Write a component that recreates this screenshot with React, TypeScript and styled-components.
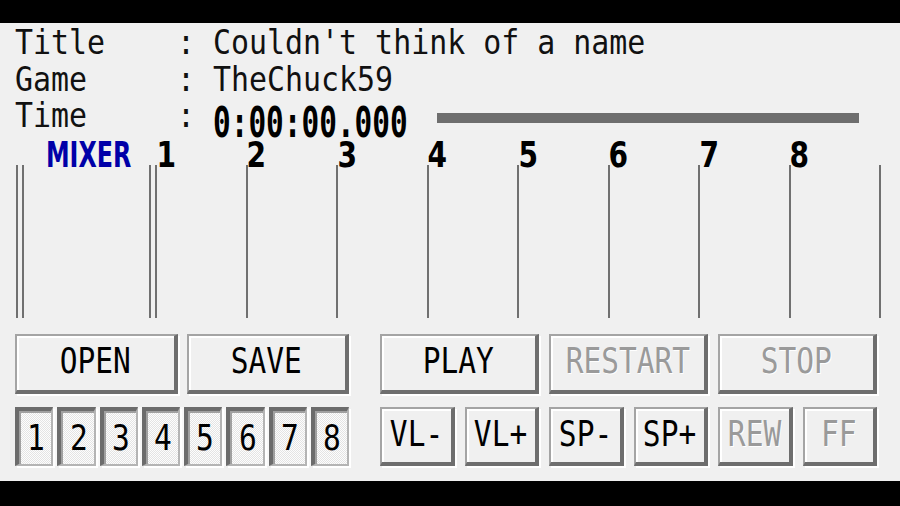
import React from 'react';
import styled, { createGlobalStyle } from 'styled-components';

const GlobalStyle = createGlobalStyle`
  html, body {
    margin: 0;
    padding: 0;
    background: #000;
  }
`;

const Screen = styled.div`
  width: 900px;
  height: 506px;
  padding: 23px 0 25px;
  box-sizing: border-box;
  background: #000;
`;

const Main = styled.div`
  height: 458px;
  background: #f0f0f0;
  display: flex;
  flex-direction: column;
`;

const Info = styled.div`
  padding: 2px 0 0 15px;
`;

const InfoLine = styled.div`
  display: flex;
  align-items: flex-start;
  height: 36.5px;
`;

const Squeeze = styled.span<{ $sx: number; $origin?: string }>`
  display: inline-block;
  white-space: pre;
  transform: scaleX(${(p) => p.$sx});
  transform-origin: ${(p) => p.$origin || 'left'} center;
`;

const InfoLabel = styled.div`
  width: 198px;
  flex-shrink: 0;
  font-family: 'DejaVu Sans Mono', monospace;
  font-size: 34px;
  line-height: 34px;
  color: #111;
`;

const InfoValue = styled(InfoLabel)`
  width: auto;
`;

const TimeDigits = styled.div`
  width: 224px;
  flex-shrink: 0;
  margin-top: 9.5px;
  font-family: 'DejaVu Sans Mono', monospace;
  font-weight: bold;
  font-size: 42px;
  line-height: 30px;
  color: #000;
`;

const ProgressBar = styled.div`
  flex: 1;
  height: 10px;
  margin: 15px 41px 0 0;
  background: #6e6e6e;
`;

const MixerRow = styled.div`
  display: flex;
  align-items: flex-start;
  height: 183.5px;
  padding-left: 16px;
`;

const VLine = styled.div<{ $gap?: number }>`
  width: 2px;
  height: 153px;
  margin-top: 30.5px;
  margin-right: ${(p) => p.$gap ?? 0}px;
  background: #707070;
  flex-shrink: 0;
`;

const MixerCol = styled.div`
  width: 125px;
  flex-shrink: 0;
  margin-top: 6.7px;
  text-align: center;
  font-family: 'DejaVu Sans', sans-serif;
  font-weight: bold;
  font-size: 36px;
  line-height: 28px;
  color: #0000a8;
`;

const Channel = styled.div`
  width: 90.5px;
  flex-shrink: 0;
  display: flex;
  flex-direction: column;
`;

const ChannelLabel = styled.div`
  height: 23.8px;
  margin-top: 6.7px;
  width: 21px;
  display: flex;
  justify-content: flex-end;
  font-family: 'DejaVu Sans', sans-serif;
  font-weight: bold;
  font-size: 36px;
  line-height: 28px;
  color: #000;
`;

const ChannelBar = styled.div`
  height: 153px;
  border-left: 2px solid #707070;
`;

const Controls = styled.div`
  display: flex;
  gap: 31px;
  margin-top: 16px;
  padding-left: 15px;
`;

const LeftGroup = styled.div`
  width: 334px;
  display: flex;
  flex-direction: column;
  gap: 13px;
`;

const FileRow = styled.div`
  display: grid;
  grid-template-columns: 1fr 1fr;
  gap: 9px;
  height: 60px;
`;

const NumRow = styled.div`
  display: grid;
  grid-template-columns: repeat(8, 1fr);
  gap: 4px;
  height: 59px;
  background: #f8f8f8;
`;

const RightGroup = styled.div`
  width: 497px;
  display: grid;
  grid-template-columns: repeat(6, 1fr);
  grid-template-rows: 60px 59px;
  gap: 13px 10px;
`;

const Button = styled.button<{ $span?: number; $disabled?: boolean }>`
  grid-column: span ${(p) => p.$span ?? 1};
  box-sizing: border-box;
  margin: 0;
  padding: 0 0 5px;
  display: flex;
  align-items: center;
  justify-content: center;
  background: #f0f0f0;
  border-style: solid;
  border-width: 2px 4px 4px 2px;
  border-color: #a4a4a4 #6e6e6e #6e6e6e #a4a4a4;
  box-shadow: inset 2px 2px 0 #fff, 2px 2px 0 #fff;
  font-family: 'DejaVu Sans Mono', monospace;
  font-size: 36px;
  color: ${(p) => (p.$disabled ? '#9a9a9a' : '#000')};
  text-shadow: ${(p) => (p.$disabled ? '1px 1px 0 #fff' : 'none')};
  overflow: visible;
`;

const NumButton = styled.button`
  box-sizing: border-box;
  margin: 0;
  padding: 2px 0 3px 2px;
  display: flex;
  align-items: center;
  justify-content: center;
  border-style: solid;
  border-width: 4px 2px 2px 4px;
  border-color: #6c6c6c #b4b4b4 #b4b4b4 #6c6c6c;
  box-shadow: inset 2px 2px 0 #a0a0a0, 2px 2px 0 #fff;
  background: repeating-conic-gradient(#fdfdfd 0 25%, #e4e4e4 0 50%) 0 0 / 2px 2px;
  font-family: 'DejaVu Sans Mono', monospace;
  font-size: 36px;
  color: #000;
`;

const channels = [1, 2, 3, 4, 5, 6, 7, 8];

const App: React.FC = () => {
  return (
    <Screen>
      <GlobalStyle />
      <Main>
        <Info>
          <InfoLine>
            <InfoLabel><Squeeze $sx={0.88}>{'Title    :'}</Squeeze></InfoLabel>
            <InfoValue><Squeeze $sx={0.88}>{"Couldn't think of a name"}</Squeeze></InfoValue>
          </InfoLine>
          <InfoLine>
            <InfoLabel><Squeeze $sx={0.88}>{'Game     :'}</Squeeze></InfoLabel>
            <InfoValue><Squeeze $sx={0.88}>TheChuck59</Squeeze></InfoValue>
          </InfoLine>
          <InfoLine>
            <InfoLabel><Squeeze $sx={0.88}>{'Time     :'}</Squeeze></InfoLabel>
            <TimeDigits><Squeeze $sx={0.7}>0:00:00.000</Squeeze></TimeDigits>
            <ProgressBar />
          </InfoLine>
        </Info>

        <MixerRow>
          <VLine $gap={4} />
          <VLine />
          <MixerCol><Squeeze $sx={0.66} $origin="center">MIXER</Squeeze></MixerCol>
          <VLine $gap={4} />
          {channels.map((n) => (
            <Channel key={n}>
              <ChannelLabel><Squeeze $sx={0.78} $origin="right">{n}</Squeeze></ChannelLabel>
              <ChannelBar />
            </Channel>
          ))}
          <VLine />
        </MixerRow>

        <Controls>
          <LeftGroup>
            <FileRow>
              <Button><Squeeze $sx={0.82} $origin="center">OPEN</Squeeze></Button>
              <Button><Squeeze $sx={0.82} $origin="center">SAVE</Squeeze></Button>
            </FileRow>
            <NumRow>
              {channels.map((n) => (
                <NumButton key={n}><Squeeze $sx={0.82} $origin="center">{n}</Squeeze></NumButton>
              ))}
            </NumRow>
          </LeftGroup>
          <RightGroup>
            <Button $span={2}><Squeeze $sx={0.82} $origin="center">PLAY</Squeeze></Button>
            <Button $span={2} $disabled><Squeeze $sx={0.82} $origin="center">RESTART</Squeeze></Button>
            <Button $span={2} $disabled><Squeeze $sx={0.82} $origin="center">STOP</Squeeze></Button>
            <Button><Squeeze $sx={0.82} $origin="center">VL-</Squeeze></Button>
            <Button><Squeeze $sx={0.82} $origin="center">VL+</Squeeze></Button>
            <Button><Squeeze $sx={0.82} $origin="center">SP-</Squeeze></Button>
            <Button><Squeeze $sx={0.82} $origin="center">SP+</Squeeze></Button>
            <Button $disabled><Squeeze $sx={0.82} $origin="center">REW</Squeeze></Button>
            <Button $disabled><Squeeze $sx={0.82} $origin="center">FF</Squeeze></Button>
          </RightGroup>
        </Controls>
      </Main>
    </Screen>
  );
};

export default App;
